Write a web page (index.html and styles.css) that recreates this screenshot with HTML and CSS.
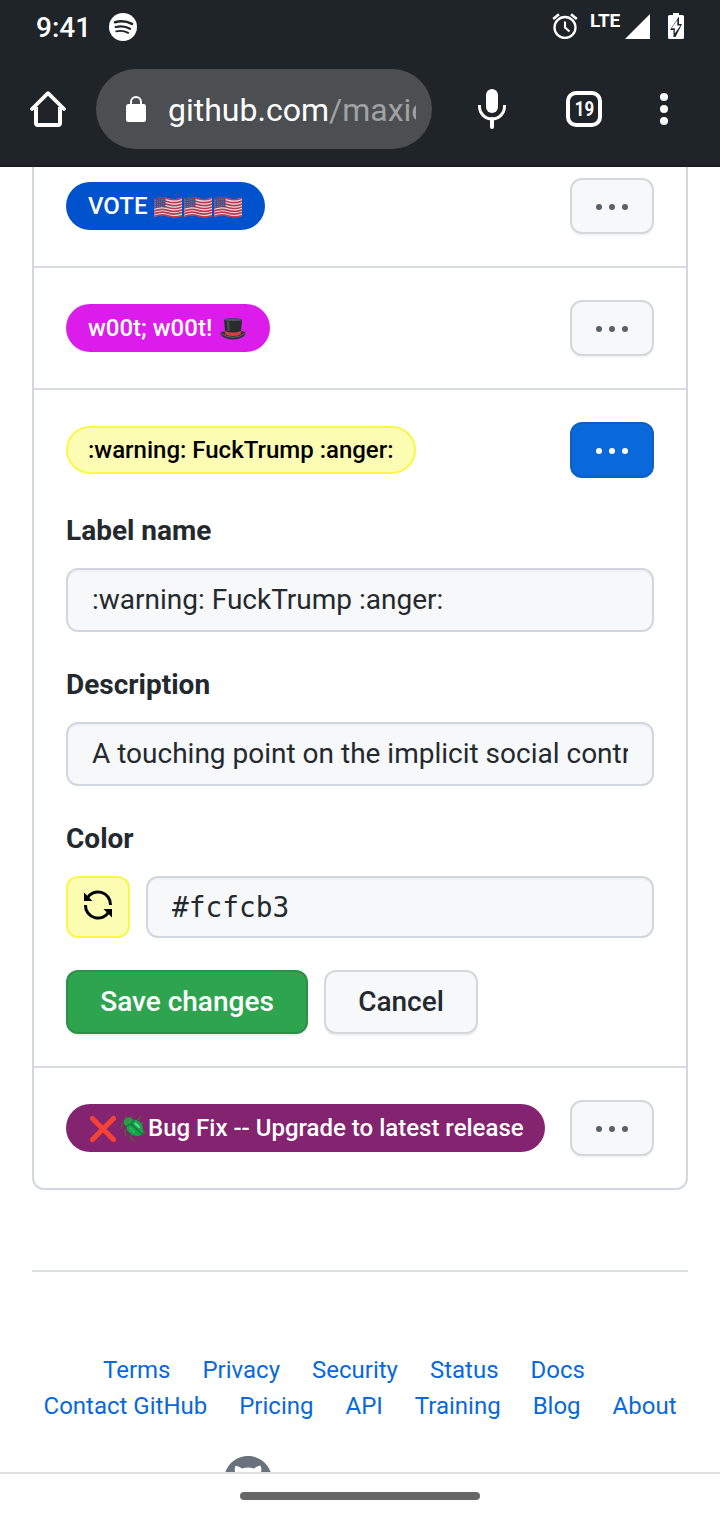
FILE: index.html
```html
<!DOCTYPE html>
<html lang="en">
<head>
<meta charset="utf-8">
<meta name="viewport" content="width=device-width">
<title>Labels</title>
<link rel="stylesheet" href="styles.css">
</head>
<body>
<svg class="defs" aria-hidden="true">
  <symbol id="dots" viewBox="0 0 32 32"><circle cx="3" cy="16" r="3"/><circle cx="16" cy="16" r="3"/><circle cx="29" cy="16" r="3"/></symbol>
  <symbol id="flag" viewBox="0 0 28 21">
    <path d="M0 2Q7-1 14 1.2T28 .6V19Q21 21.5 14 19.2T0 20Z" fill="#efe2e6"/>
    <g fill="none" stroke="#b93a50" stroke-width="1.65">
      <path d="M0 2.4Q7-.4 14 1.8T28 1.2"/><path d="M0 5.3Q7 2.5 14 4.7T28 4.1"/><path d="M0 8.2Q7 5.4 14 7.6T28 7"/><path d="M0 11.1Q7 8.3 14 10.5T28 9.9"/><path d="M0 14Q7 11.2 14 13.4T28 12.8"/><path d="M0 16.7Q7 13.9 14 16.1T28 15.6"/><path d="M0 19.4Q7 16.6 14 18.8T28 18.4"/>
    </g>
    <path d="M0 2Q6-.6 11.500.6V10.200Q5 9.200 0 11.500Z" fill="#524b82"/>
    <g stroke="#8f8bb2" stroke-width=".8" stroke-dasharray=".8 1.2"><path d="M1 3.600L11 2"/><path d="M1 5.800L11 4.200"/><path d="M1 8L11 6.400"/><path d="M1 10L11 8.400"/></g>
    <path d="M.3 2V20" stroke="#8b7890" stroke-width=".6"/>
  </symbol>
</svg>
<div class="screen">
  <header class="chrome">
    <div class="status">
      <span class="clock">9:41</span>
      <svg class="music" width="28" height="28" viewBox="0 0 28 28"><circle cx="14" cy="14" r="14" fill="#fff"/><g fill="none" stroke="#1f2428" stroke-linecap="round"><path d="M6 9.200c6-1.600 12-.9 17 1.700" stroke-width="2.600"/><path d="M6.700 14c5-1.300 10-.7 14.300 1.800" stroke-width="2.200"/><path d="M7.200 18.400c4.200-1 8.400-.5 12 1.500" stroke-width="1.800"/></g></svg>
      <svg class="alarm" width="26" height="26" viewBox="0 0 26 26" fill="none" stroke="#fff"><circle cx="13" cy="14.500" r="10.500" stroke-width="2.300"/><path d="M13 8.500v6l4.500 4" stroke-width="2.100"/><path d="M1.200 6L7 1.200M24.800 6L19 1.200" stroke-width="2.600"/></svg>
      <span class="lte">LTE</span>
      <svg class="signal" width="25" height="25" viewBox="0 0 25 25"><path d="M25 0v25H0z" fill="#fff"/></svg>
      <svg class="battery" width="16" height="26" viewBox="0 0 16 26"><path d="M5 0h6v2h3.500q1.500 0 1.500 1.500v21q0 1.500-1.500 1.500h-13Q0 26 0 24.500v-21Q0 2 1.500 2H5z" fill="#fff"/><path d="M11 3.500v7.500h3L7.500 24H5.500v-7H2z" fill="#1f2428"/><path d="M9.300 7v5.600h3.200L6.800 20.500v-5.200H3.600z" fill="#fff"/></svg>
    </div>
    <div class="toolbar">
      <svg class="home" width="36" height="36" viewBox="0 0 36 36" fill="none" stroke="#fff" stroke-width="4" stroke-linejoin="round"><path d="M6 16v16q0 2 2 2h20q2 0 2-2V16"/><path d="M2 18L18 2.200 34 18" stroke-linecap="round" stroke-width="3.800"/></svg>
      <div class="omnibox">
        <svg width="20" height="26" viewBox="0 0 20 26"><path d="M5 10V6a5 5 0 0 1 10 0v4" fill="none" stroke="#fff" stroke-width="2"/><rect y="8" width="20" height="18" rx="2.500" fill="#fff"/></svg>
        <div class="url">github.com<span>/maxie</span></div>
      </div>
      <svg class="mic" width="28" height="40" viewBox="0 0 28 40"><rect x="8" width="12" height="24" rx="6" fill="#fff"/><path d="M1.500 16v1.500a12.500 12.500 0 0 0 25 0V16" fill="none" stroke="#fff" stroke-width="3"/><path d="M14 30v8" stroke="#fff" stroke-width="4" stroke-linecap="round"/></svg>
      <div class="tabs"><span>19</span></div>
      <svg class="menu" width="8" height="32" viewBox="0 0 8 32" fill="#fff"><circle cx="4" cy="4" r="4"/><circle cx="4" cy="16" r="4"/><circle cx="4" cy="28" r="4"/></svg>
    </div>
  </header>

  <main class="page">
    <section class="list">
      <div class="row first">
        <span class="label blue">VOTE <svg class="flag one"><use href="#flag"/></svg><svg class="flag"><use href="#flag"/></svg><svg class="flag"><use href="#flag"/></svg></span>
        <button class="more"><svg><use href="#dots"/></svg></button>
      </div>
      <div class="row">
        <span class="label pink">w00t; w00t! <svg class="hat" viewBox="0 0 26 22"><path d="M.3 14.800Q3 12.500 7 14h12q4-1.500 6.700.4-.5 3.600-5 5.500-8 3.400-16-.2Q.4 18 .3 14.800z" fill="#30343a"/><path d="M1 15.500q5 3.800 12 3.800t12-4.200" fill="none" stroke="#62686c" stroke-width=".9"/><path d="M4 1.500Q13-.8 22 1.500L20.800 16q-8 3.500-15.500 0z" fill="#292b2d"/><path d="M4.900 13q8 3 16.100 0l-.3 3.500q-7.700 3-15.400 0z" fill="#d43f42"/><ellipse cx="13" cy="1.800" rx="9" ry="1.500" fill="#52565a"/><path d="M8 3.500l.7 9.500" stroke="#4d5052" stroke-width="2"/></svg></span>
        <button class="more"><svg><use href="#dots"/></svg></button>
      </div>
      <div class="row editing">
        <div class="summary">
          <span class="label yellow">:warning: FuckTrump :anger:</span>
          <button class="more active"><svg><use href="#dots"/></svg></button>
        </div>
        <form class="form">
          <label class="caption">Label name</label>
          <div class="field"><span>:warning: FuckTrump :anger:</span></div>
          <label class="caption">Description</label>
          <div class="field"><span>A touching point on the implicit social contract</span></div>
          <label class="caption">Color</label>
          <div class="color">
            <div class="swatch"><svg width="32" height="32" viewBox="0 0 32 32"><path d="M5 9.500A12.500 12.500 0 0 1 28.500 16M27 22.500A12.500 12.500 0 0 1 3.500 16" fill="none" stroke="#000" stroke-width="3"/><path d="M2 3.500V12h8.500zM30 28.500V20h-8.500z"/></svg></div>
            <div class="field mono"><span>#fcfcb3</span></div>
          </div>
          <div class="actions">
            <button type="button" class="btn save">Save changes</button>
            <button type="button" class="btn cancel">Cancel</button>
          </div>
        </form>
      </div>
      <div class="row">
        <span class="label plum"><svg class="cross" viewBox="0 0 28 28"><path d="M4.500 3.500l21 21M25.500 3.500l-21 21" stroke="#f44336" stroke-width="5.200" stroke-linecap="round"/></svg><svg class="bug" viewBox="0 0 26 28"><g fill="none" stroke="#4c6b2b" stroke-width="1.400"><path d="M6 4L5 1M9 3l2-2M4 8L1 9 .6 14M8 13l-4 3 .5 5M11 19l-1.500 4 4 3.500M16 5l3-2 .5-2M20 10l2-3M21 17l4 1"/></g><path d="M3 5Q5 2 9 2.500L14 6 6 12Q2 9 3 5z" fill="#2b9c48"/><path d="M5 11L13 5Q19 5 21 10 23 14 22 19.500 17 22 12 20 6 17.500 5 11z" fill="#17a34c"/><path d="M9.500 8.500L21.500 19.500M5 11.300Q10 10 13 5.300" fill="none" stroke="#08783a" stroke-width="1.200"/><path d="M14.500 8.500l3.500 3.500" stroke="#52dc82" stroke-width="2.200" stroke-linecap="round"/><path d="M9 13l4 4" stroke="#26bd5d" stroke-width="1.800" stroke-linecap="round"/></svg>Bug Fix -- Upgrade to latest release</span>
        <button class="more"><svg><use href="#dots"/></svg></button>
      </div>
    </section>
    <footer class="footer">
      <nav class="links short"><a>Terms</a><a>Privacy</a><a>Security</a><a>Status</a><a>Docs</a></nav>
      <nav class="links"><a>Contact GitHub</a><a>Pricing</a><a>API</a><a>Training</a><a>Blog</a><a>About</a></nav>
      <svg class="mark" width="48" height="48" viewBox="0 0 16 16" fill="#6a737d"><path fill-rule="evenodd" d="M8 0C3.580 0 0 3.580 0 8c0 3.540 2.290 6.530 5.470 7.590.4.070.55-.17.55-.38 0-.19-.01-.82-.01-1.490-2.010.37-2.530-.49-2.690-.94-.09-.23-.48-.94-.82-1.130-.28-.15-.68-.52-.01-.53.63-.01 1.080.58 1.230.82.72 1.210 1.870.87 2.330.66.07-.52.28-.87.51-1.070-1.780-.2-3.640-.89-3.640-3.950 0-.87.31-1.590.82-2.150-.08-.2-.36-1.020.08-2.120 0 0 .67-.21 2.200.82.64-.18 1.320-.27 2-.27s1.360.09 2 .27c1.530-1.040 2.200-.82 2.200-.82.44 1.100.16 1.920.08 2.120.51.56.82 1.270.82 2.150 0 3.070-1.870 3.750-3.650 3.950.29.25.54.73.54 1.480 0 1.070-.01 1.930-.01 2.200 0 .21.15.46.55.38A8.010 8.010 0 0 0 16 8c0-4.420-3.580-8-8-8z"/></svg>
    </footer>
  </main>
  <div class="gesture"><i></i></div>
</div>
</body>
</html>
```
FILE: styles.css
```css
* { box-sizing: border-box; }
body { margin: 0; background: #fff; color: #24292e; font-family: Roboto, sans-serif; }
svg { display: block; flex: none; }
button { font-family: inherit; }
.defs { display: none; }
.screen { width: 720px; height: 1520px; display: flex; flex-direction: column; overflow: hidden; }

.chrome { height: 167px; flex: none; background: #1f2428; color: #fff; border-bottom: 2px solid #1a1d21; }
.status { height: 53px; display: flex; align-items: center; padding: 0 35px 0 36px; }
.clock { flex: none; width: 73px; font-size: 28px; line-height: 53px; font-weight: 500; padding-top: 2px; }
.alarm { margin: -2px 0 0 415px; }
.lte { flex: none; width: 32px; margin: -12px 0 0 12px; font-size: 19px; line-height: 20px; font-weight: 700; letter-spacing: -.2px; }
.signal { margin-left: 3px; }
.battery { margin-left: 18px; margin-top: -1px; }
.toolbar { height: 112px; display: flex; align-items: center; padding-left: 30px; }
.omnibox { width: 336px; height: 80px; margin-left: 30px; padding: 0 16px 0 30px; display: flex; align-items: center; border-radius: 40px; background: #4c4f51; }
.url { width: 248px; margin-left: 22px; padding-top: 2px; overflow: hidden; white-space: nowrap; font-size: 32px; line-height: 42px; }
.url span { color: #a0a2a3; }
.mic { margin-left: 46px; }
.tabs { width: 36px; height: 36px; margin-left: 60px; border: 4px solid #fff; border-radius: 10px; display: flex; align-items: center; justify-content: center; font-size: 20px; font-weight: 700; }
.tabs span { transform: scaleX(.84); }
.menu { margin-left: 58px; }

.page { flex: 1; min-height: 0; overflow: hidden; padding: 0 32px; }
.list { border: 2px solid #d1d7de; border-top: 0; border-radius: 0 0 12px 12px; }
.row { height: 122px; padding: 32px; display: flex; align-items: flex-start; justify-content: space-between; border-bottom: 2px solid #d8dce1; }
.row:last-child { height: 120px; border-bottom: 0; }
.row.first { height: 101px; padding-top: 11px; }
.row.editing { height: 678px; display: block; }
.summary { display: flex; justify-content: space-between; align-items: flex-start; }
.label { height: 48px; margin-top: 4px; padding: 0 22px; border-radius: 24px; display: flex; align-items: center; color: #fff; font-size: 24px; line-height: 48px; font-weight: 500; white-space: pre; }
.blue { width: 199px; background: #0052cc; }
.pink { width: 204px; background: #db1cea; }
.yellow { width: 350px; padding: 0 20px; border: 2px solid #f8f84b; background: #fcfcb3; color: #000; }
.plum { width: 479px; background: #842370; }
.flag { width: 28px; height: 21px; margin: 2px 2px 0 0; }
.flag.one { margin-left: 1px; }
.hat { width: 26px; height: 22px; margin: 1px 0 0 2px; }
.cross { width: 28px; height: 28px; margin: 1px 2px 0 0; }
.bug { width: 26px; height: 28px; margin: 1px 1px 0 3px; }
.more { width: 84px; height: 56px; padding: 2px 0 0; border: 2px solid #d5d8da; border-radius: 12px; background: #f6f8fa; box-shadow: 0 2px 0 #f4f5f5; display: flex; align-items: center; justify-content: center; color: #586069; }
.more svg { width: 32px; height: 32px; fill: currentColor; }
.more.active { color: #fff; background: #0969da; border-color: #0d60c3; box-shadow: none; }
.form { padding-top: 32px; display: flex; flex-direction: column; }
.caption { height: 42px; margin-bottom: 16px; font-size: 28px; line-height: 42px; font-weight: 700; }
.field { height: 64px; margin-bottom: 32px; padding: 0 24px; border: 2px solid #d1d7de; border-radius: 12px; background: #f6f8fa; box-shadow: inset 0 2px 0 #eff2f5; font-size: 28px; line-height: 60px; }
.field span { display: block; overflow: hidden; white-space: nowrap; }
.color { display: flex; gap: 16px; margin-bottom: 32px; }
.swatch { width: 64px; height: 62px; padding: 11px 14px; border: 2px solid #f8f84b; border-radius: 12px; background: #fcfcb3; }
.mono { flex: 1; height: 62px; margin: 0; font-family: "DejaVu Sans Mono", monospace; font-size: 27.8px; line-height: 60px; }
.actions { display: flex; gap: 16px; }
.btn { height: 64px; padding: 0 0 2px; border: 2px solid #d5d8da; border-radius: 12px; font-size: 28px; font-weight: 500; color: #24292e; background: #f6f8fa; box-shadow: 0 2px 0 #f0f1f1; }
.save { width: 242px; color: #fff; background: #2ea44f; border-color: #2a9147; }
.cancel { width: 154px; }

.footer { margin-top: 80px; border-top: 2px solid #dde0e3; padding-top: 80px; }
.links { height: 36px; display: flex; justify-content: center; gap: 32px; color: #0969da; font-size: 24px; line-height: 36px; white-space: nowrap; }
.links.short { padding-right: 32px; }
.mark { margin: 32px 0 0 192px; }
.gesture { height: 48px; flex: none; border-top: 2px solid #e0e0e0; padding-top: 18px; }
.gesture i { display: block; width: 240px; height: 8px; margin: 0 auto; border-radius: 4px; background: #666; }
```
